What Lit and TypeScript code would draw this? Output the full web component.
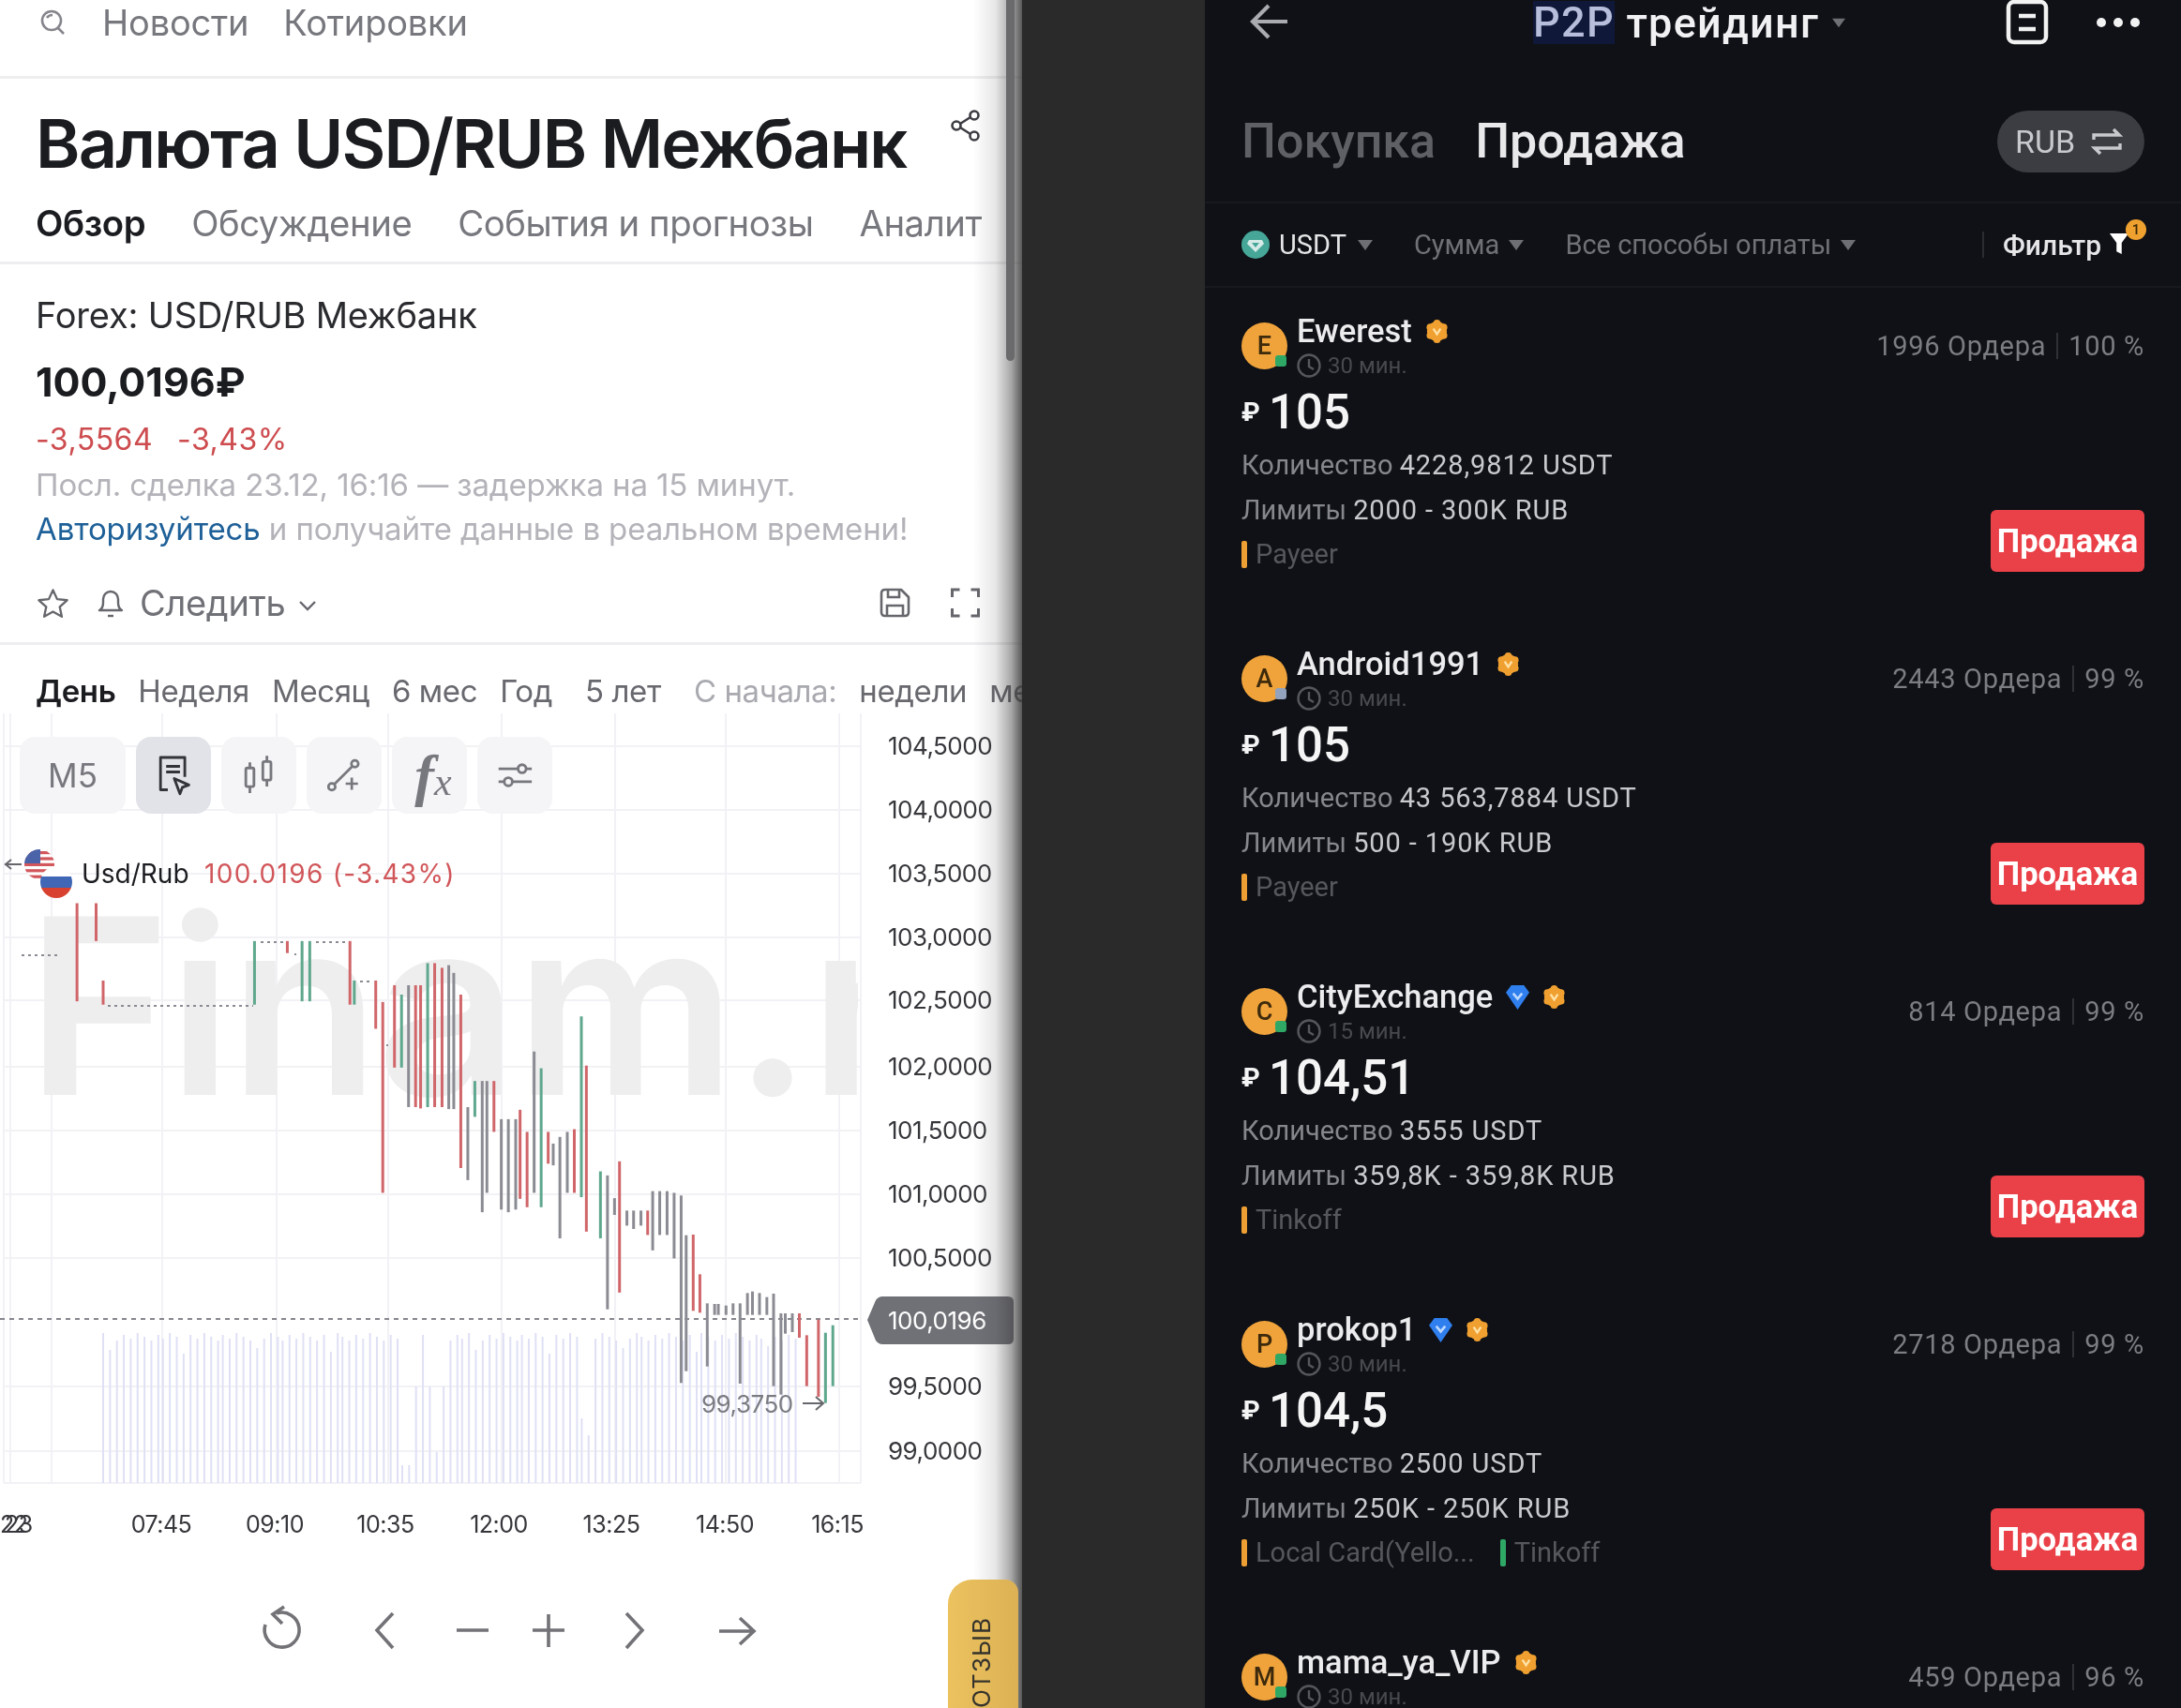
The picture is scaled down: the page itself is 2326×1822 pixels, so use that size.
import { LitElement, css, html, svg } from "lit";
import { customElement } from "lit/decorators.js";

const GRID_Y = [795, 863, 931, 999, 1066, 1137, 1205, 1273, 1341, 1478, 1547];
const GRID_X = [4, 11, 55, 173, 295, 414, 535, 656, 774, 895, 918];
const AXIS = [
  ["104,5000", 795], ["104,0000", 863], ["103,5000", 931], ["103,0000", 999],
  ["102,5000", 1066], ["102,0000", 1137], ["101,5000", 1205], ["101,0000", 1273],
  ["100,5000", 1341], ["99,5000", 1478], ["99,0000", 1547],
] as const;
const TIMES = [["07:45", 172], ["09:10", 293], ["10:35", 411], ["12:00", 532], ["13:25", 652], ["14:50", 773], ["16:15", 893]] as const;

const RED = "#d0666a";
const GREEN = "#5fa78d";
const GRAY = "#8b8c93";

// [x, top, bottom, colour], read off the zoomed reference
const z2 = (x: number, a: number, b: number, c: string) => [x / 2.8, 760 + a / 2.8, 760 + b / 2.8, c] as const;
const z3 = (x: number, a: number, b: number, c: string) => [540 + x / 2.8, 760 + a / 2.8, 760 + b / 2.8, c] as const;
const z5 = (x: number, a: number, b: number, c: string) => [540 + x / 2.8, 1300 + a / 3, 1300 + b / 3, c] as const;
const BARS = [
  z2(230, 567, 860, RED), z2(287, 567, 680, RED), z2(308, 798, 870, RED), z2(760, 680, 870, GREEN),
  z2(858, 680, 716, RED), z2(902, 680, 860, GREEN), z2(925, 680, 860, GREEN), z2(1045, 680, 870, RED),
  z2(1058, 798, 870, GREEN), z2(1122, 798, 942, RED), z2(1143, 862, 1432, RED), z2(1178, 812, 1058, RED),
  z2(1199, 840, 1058, GREEN), z2(1220, 812, 1176, GRAY), z2(1241, 812, 1176, RED), z2(1256, 812, 1180, RED),
  z2(1277, 746, 1176, GREEN), z2(1298, 746, 1176, RED), z2(1320, 760, 1176, RED), z2(1340, 752, 1182, GRAY),
  z2(1355, 775, 1182, GRAY), z2(1376, 840, 1358, RED), z2(1397, 1176, 1394, GRAY), z2(1418, 1098, 1205, GREEN),
  z2(1440, 1098, 1490, GRAY), z2(1454, 1098, 1432, GRAY), z2(1475, 1098, 1250, RED), z2(1497, 1212, 1482, GRAY),
  z2(1518, 1212, 1490, GRAY), z2(1540, 1212, 1482, GRAY), z2(1553, 1184, 1450, RED),
  z3(62, 1250, 1475, RED), z3(83, 1010, 1432, GRAY), z3(104, 1060, 1475, GREEN), z3(125, 1250, 1345, RED),
  z3(140, 1285, 1350, GRAY), z3(160, 1265, 1568, GRAY), z3(182, 1250, 1432, GRAY), z3(203, 1242, 1432, RED),
  z3(224, 905, 1445, GREEN), z3(239, 1052, 1548, RED), z3(281, 1368, 1568, GREEN), z3(302, 1380, 1780, GRAY),
  z3(323, 1448, 1498, GRAY), z3(338, 1338, 1730, RED), z3(360, 1485, 1530, GRAY), z3(380, 1485, 1540, GRAY),
  z3(402, 1485, 1530, GRAY), z3(422, 1485, 1558, RED), z3(437, 1427, 1604, GRAY), z3(458, 1427, 1558, GRAY),
  z3(480, 1427, 1558, GRAY), z3(501, 1432, 1628, GRAY), z3(522, 1440, 2000, GRAY),
  z5(537, 50, 485, GRAY), z5(558, 48, 292, RED), z5(578, 175, 298, RED), z5(600, 268, 470, GRAY),
  z5(622, 270, 305, GRAY), z5(633, 270, 305, GRAY), z5(656, 275, 305, GRAY), z5(677, 268, 305, GRAY),
  z5(698, 268, 525, GRAY), z5(720, 235, 305, GRAY), z5(735, 230, 305, GRAY), z5(756, 235, 305, GRAY),
  z5(778, 248, 305, GRAY), z5(798, 237, 533, GRAY), z5(820, 300, 560, GRAY), z5(833, 300, 365, GRAY),
  z5(854, 300, 360, GRAY), z5(875, 300, 378, RED), z5(897, 370, 533, RED), z5(932, 320, 567, RED),
  z5(953, 362, 587, GREEN), z5(975, 338, 533, GREEN),
];

// dashes of flat 5-minute bars: [x1, x2, y]
const FLATS = [
  [23, 62, 1018], [115, 270, 1072], [278, 305, 1004], [337, 368, 1004], [384, 395, 1046],
  [314, 316, 1017], [412, 414, 1114],
];

// volume bar tops, with the low ones around 10:35-11:30 and 13:00 listed apart
const VOL_LOW: Record<number, number> = { 428: 1562, 436: 1562, 443: 1478, 456: 1478, 464: 1548, 471: 1478, 484: 1447, 620: 1512, 626: 1530 };
const VOLS = (() => {
  const out: [number, number][] = [];
  let x = 110;
  let i = 0;
  while (x < 853) {
    const rx = Math.round(x);
    const key = Object.keys(VOL_LOW).map(Number).find((k) => Math.abs(k - rx) < 4);
    const top = key ? VOL_LOW[key] : 1421 + ((i * 7) % 5) * 2 + (i % 11 === 1 ? 14 : 0);
    out.push([x, top]);
    x += i % 9 === 8 ? 5 : 7.35;
    i++;
  }
  return out;
})();

type Offer = {
  name: string; letter: string; dot: string; diamond?: boolean; time: string; price: string;
  orders: string; pct: string; qty: string; limits: string; pays: [string, string][];
};
const ORANGE = "#ee9f33";
const ONLINE = "#2fa866";
const OFFERS: Offer[] = [
  { name: "Ewerest", letter: "E", dot: ONLINE, time: "30 мин.", price: "105", orders: "1996 Ордера", pct: "100 %", qty: "4228,9812 USDT", limits: "2000 - 300K RUB", pays: [["Payeer", ORANGE]] },
  { name: "Android1991", letter: "A", dot: "#93a3bd", time: "30 мин.", price: "105", orders: "2443 Ордера", pct: "99 %", qty: "43 563,7884 USDT", limits: "500 - 190K RUB", pays: [["Payeer", ORANGE]] },
  { name: "CityExchange", letter: "C", dot: ONLINE, diamond: true, time: "15 мин.", price: "104,51", orders: "814 Ордера", pct: "99 %", qty: "3555 USDT", limits: "359,8K - 359,8K RUB", pays: [["Tinkoff", ORANGE]] },
  { name: "prokop1", letter: "P", dot: ONLINE, diamond: true, time: "30 мин.", price: "104,5", orders: "2718 Ордера", pct: "99 %", qty: "2500 USDT", limits: "250K - 250K RUB", pays: [["Local Card(Yello...", ORANGE], ["Tinkoff", "#2fa866"]] },
  { name: "mama_ya_VIP", letter: "M", dot: ONLINE, time: "30 мин.", price: "", orders: "459 Ордера", pct: "96 %", qty: "", limits: "", pays: [] },
];

const caret = html`<svg class="caret" viewBox="0 0 16 13"><path d="M0 1h16L8 12z" /></svg>`;

const medal = html`<svg class="medal" viewBox="0 0 26 30">
  <g fill="#f0a030">
    <circle cx="13" cy="15" r="11" />
    <circle cx="13" cy="6" r="4" /><circle cx="13" cy="24" r="4" />
    <circle cx="5.500" cy="10.500" r="4" /><circle cx="20.500" cy="10.500" r="4" />
    <circle cx="5.500" cy="19.500" r="4" /><circle cx="20.500" cy="19.500" r="4" />
  </g>
  <path d="M9 12l4 6 4-6" fill="none" stroke="#ffe2a8" stroke-width="2.400" />
</svg>`;

const diamond = html`<svg class="diamond" viewBox="0 0 26 30">
  <path d="M6 2h14l6 8-13 19L0 10z" fill="#2f7fee" />
  <path d="M8 11l5 6 5-6" fill="none" stroke="#bcd8ff" stroke-width="2.600" />
</svg>`;

const clock = html`<svg class="clock" viewBox="0 0 26 28">
  <circle cx="13" cy="14" r="11.500" fill="none" stroke="#55575c" stroke-width="2.400" />
  <path d="M13 7v8l5 3" fill="none" stroke="#55575c" stroke-width="2.400" />
</svg>`;

@customElement("app-root")
export class AppRoot extends LitElement {
  renderChart() {
    return html`<svg class="plot" viewBox="0 760 1090 930" width="1090" height="930">
      <g stroke="#f2f2f6" stroke-width="2" fill="none">
        ${GRID_Y.map((y) => svg`<line x1="4" x2="918" y1=${y} y2=${y} />`)}
        ${GRID_X.map((x) => svg`<line x1=${x} x2=${x} y1="760" y2="1581" />`)}
        <line x1="4" x2="918" y1="1581" y2="1581" />
      </g>
      <defs>
        <clipPath id="pane"><rect x="0" y="760" width="915" height="821" /></clipPath>
        <clipPath id="us"><circle cx="42" cy="921" r="16" /></clipPath>
        <clipPath id="ru"><circle cx="60" cy="940" r="17" /></clipPath>
      </defs>
      <g clip-path="url(#pane)"><text x="28" y="1167" class="mark">Finam.ru</text></g>
      <g stroke="#dfe0f5" stroke-width="2">
        ${VOLS.map(([x, t]) => svg`<line x1=${x} x2=${x} y1=${t} y2="1581" />`)}
      </g>
      <line x1="0" x2="918" y1="1406" y2="1406" stroke="#85868c" stroke-width="2" stroke-dasharray="5 5" />
      ${FLATS.map(([a, b, y]) => svg`<line x1=${a} x2=${b} y1=${y} y2=${y} stroke="#8b8c93" stroke-width="2" stroke-dasharray="3 4" />`)}
      ${BARS.map(([x, a, b, c]) => svg`<line x1=${x} x2=${x} y1=${a} y2=${b} stroke=${c} stroke-width="3" />`)}
      <path d="M925 1407l9-21q3-4 7-4h134q6 0 6 6v39q0 6-6 6h-134q-4 0-7-4z" fill="#707177" />
      <text x="947" y="1417" class="tag">100,0196</text>
      ${AXIS.map(([t, y]) => svg`<text x="947" y=${y + 9} class="axis">${t}</text>`)}
      <text x="748" y="1506" class="low">99,3750</text>
      <path d="M856 1496h22m-8-7l8 7-8 7" fill="none" stroke="#66676c" stroke-width="2" />
      ${TIMES.map(([t, x]) => svg`<text x=${x} y="1634" class="time" text-anchor="middle">${t}</text>`)}
      <text x="0" y="1634" class="time">22</text><text x="5" y="1634" class="time">23</text>
      <path d="M5 921h18m-11-5l-6 5 6 5" fill="none" stroke="#66676c" stroke-width="2" />
      <g clip-path="url(#us)">
        <rect x="26" y="905" width="32" height="32" fill="#fff" />
        ${[0, 1, 2, 3, 4].map((i) => svg`<rect x="26" y=${907 + i * 6.4} width="32" height="3.200" fill="#d2575c" />`)}
        <rect x="26" y="905" width="17" height="15" fill="#4b63a8" />
      </g>
      <g clip-path="url(#ru)">
        <rect x="43" y="923" width="34" height="11" fill="#fff" />
        <rect x="43" y="934" width="34" height="12" fill="#3f67b5" />
        <rect x="43" y="946" width="34" height="12" fill="#d8412f" />
      </g>
      <text x="87" y="941" class="pair">Usd/Rub</text>
      <text x="218" y="941" class="quote">100.0196 (-3.43%)</text>
    </svg>`;
  }

  renderToolbar() {
    return html`<div class="tools">
      <div class="tool m5">M5</div>
      <div class="tool on">
        <svg viewBox="0 0 44 50" width="38" height="46" fill="none" stroke="#33343a" stroke-width="3.300">
          <path d="M15 43H6V3h30v24" stroke-linejoin="round" />
          <path d="M13 14h17M13 21h17" />
          <path d="M23 29l18 8-8 3-3 8z" stroke-linejoin="round" />
        </svg>
      </div>
      <div class="tool">
        <svg viewBox="0 0 44 50" width="38" height="44" fill="none" stroke="#77787e" stroke-width="3.300">
          <rect x="6" y="16" width="10" height="23" rx="2" /><path d="M11 9v7M11 39v8" />
          <rect x="27" y="8" width="10" height="23" rx="2" /><path d="M32 1v7M32 31v8" />
        </svg>
      </div>
      <div class="tool">
        <svg viewBox="0 0 44 44" width="36" height="38" fill="none" stroke="#77787e" stroke-width="3.300">
          <circle cx="6" cy="37" r="4.500" /><circle cx="36" cy="7" r="4.500" /><path d="M9 34L33 10" />
          <path d="M24 33h16M32 25v16" />
        </svg>
      </div>
      <div class="tool fx"><span class="f">f</span><span class="x">x</span></div>
      <div class="tool">
        <svg viewBox="0 0 44 30" width="38" height="28" fill="none" stroke="#77787e" stroke-width="3.300">
          <path d="M2 7h24M36 7h7M2 23h7M19 23h24" /><circle cx="31" cy="7" r="5" /><circle cx="14" cy="23" r="5" />
        </svg>
      </div>
    </div>`;
  }

  renderLeft() {
    return html`<section class="left">
      <div class="topbar">
        <svg class="search" viewBox="0 0 28 28" fill="none" stroke="#85868c" stroke-width="2.600">
          <circle cx="13" cy="12" r="10" /><path d="M20 20l6 6M8 9q2-3 6-3" />
        </svg>
        <span>Новости</span><span>Котировки</span>
      </div>
      <div class="titlerow">
        <h1>Валюта USD/RUB Межбанк</h1>
        <svg class="share" viewBox="0 0 32 34" fill="none" stroke="#3c3d42" stroke-width="2.600">
          <circle cx="25" cy="6" r="4.500" /><circle cx="6" cy="17" r="4.500" /><circle cx="25" cy="28" r="4.500" />
          <path d="M10 15l11-7M10 19l11 7" />
        </svg>
      </div>
      <nav class="tabs">
        <b>Обзор</b><span>Обсуждение</span><span>События и прогнозы</span><span>Аналит</span>
      </nav>
      <div class="summary">
        <div class="forex">Forex: USD/RUB Межбанк</div>
        <div class="price">100,0196₽</div>
        <div class="delta"><span>-3,5564</span><span>-3,43%</span></div>
        <div class="note">Посл. сделка 23.12, 16:16 — задержка на 15 минут.</div>
        <div class="note"><a>Авторизуйтесь</a> и получайте данные в реальном времени!</div>
      </div>
      <div class="actions">
        <svg class="act star" viewBox="0 0 34 32" fill="none" stroke="#66676c" stroke-width="2.400">
          <path d="M17 2l4.600 10 10.900 1.200-8.100 7.300 2.300 10.700L17 25.800 7.300 31.200l2.300-10.700L1.500 13.200 12.400 12z" stroke-linejoin="round" />
        </svg>
        <svg class="act bell" viewBox="0 0 30 32" fill="none" stroke="#66676c" stroke-width="2.400">
          <path d="M3 24q4-2 4-8v-4a8 8 0 0116 0v4q0 6 4 8z" stroke-linejoin="round" /><path d="M12 30h6" />
        </svg>
        <span class="follow">Следить</span>
        <svg class="chev" viewBox="0 0 18 12" fill="none" stroke="#66676c" stroke-width="2.400"><path d="M1 2l8 8 8-8" /></svg>
        <span class="grow"></span>
        <svg class="act" viewBox="0 0 33 32" fill="none" stroke="#66676c" stroke-width="2.600">
          <path d="M2 6q0-4 4-4h17l8 8v16q0 4-4 4H6q-4 0-4-4z" stroke-linejoin="round" />
          <path d="M8 30V19h17v11M9 2v8h12V2" />
        </svg>
        <svg class="act full" viewBox="0 0 32 32" fill="none" stroke="#66676c" stroke-width="3">
          <path d="M2 10V2h8M22 2h8v8M30 22v8h-8M10 30H2v-8" />
        </svg>
      </div>
      <div class="ranges">
        <b>День</b><span>Неделя</span><span>Месяц</span><span>6 мес</span><span>Год</span>
        <span class="wide">5 лет</span><span class="dim">С начала:</span><span>недели</span><span>ме</span>
      </div>
      <div class="chart">${this.renderChart()}${this.renderToolbar()}</div>
      <svg class="navbar" viewBox="0 1690 1090 132" width="1090" height="132" fill="none" stroke="#727277" stroke-width="3.600">
        <path d="M283 1732a18.500 18.500 0 1 0 12-12" />
        <path d="M303 1713l-12 8 10 10" />
        <path d="M419 1720l-17 18 17 19M487 1738h34M568 1738h34M585 1721v35M668 1720l17 18-17 19M767 1739h37m-15-14l15 14-15 14" />
      </svg>
      <div class="shade"></div>
      <div class="thumb"></div>
      <div class="feedback"><span>ОТЗЫВ</span></div>
    </section>`;
  }

  renderOffer(o: Offer) {
    return html`<article class="offer">
      <div class="info">
        <div class="who">
          <div class="avatar">${o.letter}<i style="background:${o.dot}"></i></div>
          <div>
            <div class="name">${o.name}${o.diamond ? diamond : ""}${medal}</div>
            <div class="wait">${clock}${o.time}</div>
          </div>
        </div>
        ${o.price
          ? html`<div class="rate"><small>₽</small>${o.price}</div>
              <div class="line">Количество <em>${o.qty}</em></div>
              <div class="line">Лимиты <em>${o.limits}</em></div>
              <div class="pays">
                ${o.pays.map(([p, c]) => html`<span class="pay"><i style="background:${c}"></i>${p}</span>`)}
              </div>`
          : ""}
      </div>
      <div class="side">
        <div class="stats">${o.orders}<i></i>${o.pct}</div>
        ${o.price ? html`<button>Продажа</button>` : ""}
      </div>
    </article>`;
  }

  renderRight() {
    return html`<section class="right">
      <header>
        <svg class="back" viewBox="0 0 42 38" fill="none" stroke="#a9abb0" stroke-width="4.200">
          <path d="M41 19H4M21 2L4 19l17 17" />
        </svg>
        <div class="title"><mark>P2P</mark> трейдинг${caret}</div>
        <svg class="doc" viewBox="0 0 46 48" fill="none" stroke="#f2f2f2" stroke-width="4.500">
          <rect x="3" y="2" width="40" height="43" rx="6" />
          <path d="M14 17h18M14 31h18" />
        </svg>
        <div class="dots"><i></i><i></i><i></i></div>
      </header>
      <div class="sides">
        <span class="off">Покупка</span><span>Продажа</span>
        <div class="fiat">
          RUB
          <svg viewBox="0 0 34 30" fill="none" stroke="#c8c9cd" stroke-width="3.400">
            <path d="M3 13V8h27l-6-6M31 17v5H4l6 6" />
          </svg>
        </div>
      </div>
      <div class="filters">
        <svg class="coin" viewBox="0 0 30 30">
          <circle cx="15" cy="15" r="15" fill="#46a698" />
          <path d="M8 10h14l2 4-9 9-9-9z" fill="#d6ebe8" />
          <path d="M11 13h8l-4 5z" fill="#46a698" />
        </svg>
        <span class="lit">USDT</span>${caret}
        <span class="opt">Сумма</span>${caret}
        <span class="opt">Все способы оплаты</span>${caret}
        <span class="grow"></span>
        <i class="sep"></i>
        <span class="lit strong">Фильтр</span>
        <span class="funnel">
          <svg viewBox="0 0 24 26"><path d="M1 1h22l-8 11v13l-6-3V12z" fill="#fff" /></svg>
          <b>1</b>
        </span>
      </div>
      ${OFFERS.map((o) => this.renderOffer(o))}
    </section>`;
  }

  render() {
    return html`${this.renderLeft()}<div class="gutter"></div>${this.renderRight()}`;
  }

  static styles = css`
    :host {
      display: flex;
      width: 2326px;
      height: 1822px;
      overflow: hidden;
      background: #2a2a2a;
    }
    svg {
      display: block;
      flex: none;
    }

    /* left: quote page */
    .left {
      position: relative;
      width: 1090px;
      height: 1822px;
      flex: none;
      overflow: hidden;
      background: #fff;
      color: #1b1c20;
      font-family: Inter, "Noto Sans", sans-serif;
      filter: blur(0.5px);
    }
    .topbar {
      box-sizing: border-box;
      height: 84px;
      padding: 0 0 33px 42px;
      border-bottom: 3px solid #eeeef0;
      display: flex;
      align-items: center;
      gap: 37px;
      font-size: 38px;
      color: #77787e;
      letter-spacing: -0.2px;
    }
    .search {
      width: 28px;
      height: 28px;
      margin-right: 2px;
    }
    .titlerow {
      height: 135px;
      padding: 19px 44px 0 38px;
      box-sizing: border-box;
      display: flex;
      justify-content: space-between;
      align-items: flex-start;
    }
    h1 {
      margin: 0;
      height: 100px;
      line-height: 100px;
      font-size: 72px;
      font-weight: 600;
      letter-spacing: -1.8px;
      white-space: nowrap;
    }
    .share {
      width: 32px;
      height: 34px;
      margin-top: 14px;
    }
    .tabs {
      height: 63px;
      box-sizing: border-box;
      border-bottom: 3px solid #eeeef0;
      padding: 0 0 22px 38px;
      display: flex;
      align-items: center;
      gap: 49px;
      font-size: 38.300px;
      letter-spacing: -0.45px;
      color: #77787e;
      white-space: nowrap;
    }
    .tabs b {
      color: #1b1c20;
      font-weight: 600;
    }
    .summary {
      padding: 33px 0 0 38px;
      height: 338px;
      box-sizing: border-box;
    }
    .forex {
      height: 42px;
      line-height: 42px;
      font-size: 38px;
      letter-spacing: -0.2px;
      color: #2a2b2f;
    }
    .price {
      margin-top: 27px;
      height: 46px;
      line-height: 46px;
      font-size: 43px;
      font-weight: 700;
    }
    .delta {
      margin-top: 19px;
      height: 40px;
      line-height: 40px;
      display: flex;
      gap: 26px;
      font-size: 32px;
      letter-spacing: 0.5px;
      color: #cd4c4f;
    }
    .note {
      margin-top: 8px;
      height: 40px;
      line-height: 40px;
      font-size: 33px;
      letter-spacing: -0.1px;
      color: #b3b3b9;
      white-space: nowrap;
    }
    .note + .note {
      margin-top: 7px;
    }
    .note a {
      color: #1e6098;
    }
    .actions {
      height: 68px;
      box-sizing: border-box;
      border-bottom: 3px solid #eeeef0;
      padding: 0 44px 20px 40px;
      display: flex;
      align-items: center;
      font-size: 38px;
      letter-spacing: -0.3px;
      color: #707177;
    }
    .act {
      width: 33px;
      height: 32px;
    }
    .bell {
      width: 30px;
      margin-left: 30px;
    }
    .full {
      margin-left: 42px;
    }
    .follow {
      margin-left: 16px;
    }
    .chev {
      width: 18px;
      height: 12px;
      margin: 6px 0 0 14px;
    }
    .grow {
      flex: 1;
    }
    .ranges {
      height: 73px;
      box-sizing: border-box;
      padding: 24px 0 0 38px;
      display: flex;
      align-items: center;
      gap: 24px;
      font-size: 33px;
      letter-spacing: -0.4px;
      color: #68696f;
      white-space: nowrap;
    }
    .ranges b {
      color: #1b1c20;
      font-weight: 600;
    }
    .ranges .wide {
      margin-left: 11px;
      margin-right: 11px;
    }
    .ranges .dim {
      color: #a9aab0;
    }
    .chart {
      position: relative;
      height: 930px;
    }
    .plot {
      position: absolute;
      inset: 0;
    }
    .mark {
      font: 600 262px Inter, sans-serif;
      fill: #eeeeef;
      letter-spacing: -3px;
    }
    .axis,
    .tag,
    .time,
    .low {
      font: 400 26px Inter, sans-serif;
      letter-spacing: -0.5px;
    }
    .axis {
      fill: #36373b;
    }
    .tag {
      fill: #fff;
    }
    .time {
      font-size: 25px;
      fill: #36373b;
    }
    .low {
      fill: #7b7c82;
    }
    .pair {
      font: 400 28px Inter, sans-serif;
      fill: #1b1c20;
    }
    .quote {
      font: 400 28px Inter, sans-serif;
      letter-spacing: 1.300px;
      fill: #d1565a;
    }
    .tools {
      position: absolute;
      left: 21px;
      top: 25px;
      display: flex;
      gap: 11px;
    }
    .tool {
      width: 80px;
      height: 82px;
      border-radius: 16px;
      background: #f5f5f7;
      display: flex;
      align-items: center;
      justify-content: center;
    }
    .tool.on {
      background: #e2e3e8;
    }
    .m5 {
      width: 113px;
      font-size: 35px;
      color: #77787e;
    }
    .fx {
      font-family: "Liberation Serif", serif;
      font-style: italic;
      color: #77787e;
      align-items: baseline;
      padding: 6px 0 0 8px;
      box-sizing: border-box;
    }
    .fx .f {
      font-size: 62px;
      font-weight: 700;
    }
    .fx .x {
      font-size: 42px;
    }
    .navbar {
      display: block;
    }
    .shade {
      position: absolute;
      top: 0;
      right: 0;
      width: 52px;
      height: 100%;
      background: linear-gradient(
        to right,
        rgba(60, 60, 60, 0),
        rgba(60, 60, 60, 0.12) 45%,
        rgba(60, 60, 60, 0.45) 78%,
        rgba(60, 60, 60, 0.85)
      );
    }
    .thumb {
      position: absolute;
      top: 0;
      left: 1073px;
      width: 9px;
      height: 385px;
      border-radius: 0 0 5px 5px;
      background: #6a6a6c;
    }
    .feedback {
      position: absolute;
      left: 1011px;
      top: 1685px;
      width: 75px;
      height: 137px;
      box-sizing: border-box;
      border-radius: 26px 14px 0 0;
      background: linear-gradient(to right, #ecc25f, #dcb155);
      overflow: hidden;
    }
    .feedback span {
      position: absolute;
      left: 36px;
      top: 137px;
      transform: rotate(-90deg);
      transform-origin: 0 0;
      margin-left: -17px;
      line-height: 34px;
      font-size: 26px;
      letter-spacing: 1px;
      color: #35332c;
      white-space: nowrap;
    }

    .gutter {
      width: 195px;
      flex: none;
      background: #2a2a2a;
    }

    /* right: P2P list */
    .right {
      flex: 1;
      height: 1822px;
      overflow: hidden;
      background: #0f1116;
      color: #e9e9eb;
      font-family: Roboto, "Noto Sans", sans-serif;
      filter: blur(0.7px);
    }
    header {
      height: 60px;
      display: flex;
      align-items: center;
      position: relative;
    }
    .back {
      width: 42px;
      height: 38px;
      margin: 0 0 14px 47px;
    }
    .title {
      position: absolute;
      left: 350px;
      top: 0;
      height: 48px;
      display: flex;
      align-items: center;
      font-size: 45px;
      font-weight: 500;
      letter-spacing: 1.300px;
      white-space: pre;
      color: #f1f1f3;
    }
    mark {
      background: #10183a;
      color: #b7bedb;
      line-height: 46px;
    }
    .title .caret {
      margin-left: 14px;
      width: 14px;
    }
    .caret {
      width: 16px;
      height: 13px;
      fill: #6d6f74;
    }
    .doc {
      position: absolute;
      left: 854px;
      top: 0;
      width: 46px;
      height: 48px;
    }
    .dots {
      position: absolute;
      left: 951px;
      top: 19px;
      display: flex;
      gap: 8px;
    }
    .dots i {
      width: 10px;
      height: 10px;
      border-radius: 50%;
      background: #f2f2f2;
    }
    .sides {
      box-sizing: border-box;
      height: 157px;
      border-bottom: 2px solid #17191e;
      padding: 25px 39px 0;
      display: flex;
      align-items: center;
      gap: 42px;
      font-size: 52px;
      font-weight: 500;
    }
    .off {
      color: #5e6065;
    }
    .fiat {
      margin-left: auto;
      width: 157px;
      height: 66px;
      margin-top: 2px;
      box-sizing: border-box;
      padding-left: 19px;
      border-radius: 33px;
      background: #3b3d42;
      display: flex;
      align-items: center;
      gap: 17px;
      font-size: 34px;
      font-weight: 400;
      color: #c8c9cd;
    }
    .fiat svg {
      width: 34px;
      height: 30px;
    }
    .filters {
      box-sizing: border-box;
      height: 90px;
      margin-bottom: 22px;
      border-bottom: 2px solid #17191e;
      padding: 0 39px;
      display: flex;
      align-items: center;
      font-size: 29px;
      color: #6f7176;
    }
    .coin {
      width: 30px;
      height: 30px;
      margin-right: 10px;
    }
    .lit {
      color: #e6e6e8;
      margin-right: 12px;
    }
    .opt {
      margin: 0 10px 0 44px;
    }
    .sep {
      width: 2px;
      height: 28px;
      background: #2a2c31;
      margin-right: 20px;
    }
    .strong {
      font-size: 30px;
      font-weight: 500;
      margin-right: 8px;
    }
    .funnel {
      position: relative;
      width: 22px;
      height: 26px;
      margin-right: 16px;
    }
    .funnel b {
      position: absolute;
      left: 18px;
      top: -14px;
      width: 22px;
      height: 22px;
      border-radius: 50%;
      background: #eea12f;
      color: #3a2a08;
      font-size: 15px;
      font-weight: 500;
      line-height: 22px;
      text-align: center;
    }
    .offer {
      box-sizing: border-box;
      height: 355px;
      padding: 0 39px;
      display: flex;
      justify-content: space-between;
    }
    .info {
      height: 281px;
    }
    .who {
      display: flex;
      gap: 10px;
    }
    .avatar {
      position: relative;
      width: 49px;
      height: 50px;
      margin-top: 15px;
      border-radius: 50%;
      background: #f0a33b;
      color: #3d2a0c;
      font-size: 27px;
      font-weight: 500;
      line-height: 50px;
      text-align: center;
    }
    .avatar i {
      position: absolute;
      right: 1px;
      bottom: 3px;
      width: 12px;
      height: 12px;
      border-radius: 3px;
    }
    .name {
      height: 48px;
      display: flex;
      align-items: center;
      gap: 14px;
      font-size: 34.500px;
      font-weight: 500;
      color: #ececee;
    }
    .medal,
    .diamond {
      width: 25px;
      height: 29px;
    }
    .wait {
      height: 26px;
      display: flex;
      align-items: center;
      gap: 7px;
      font-size: 24px;
      color: #47494e;
    }
    .clock {
      width: 26px;
      height: 28px;
    }
    .rate {
      margin-top: 13px;
      height: 48px;
      line-height: 48px;
      font-size: 51px;
      font-weight: 500;
      color: #f5f5f6;
      display: flex;
      align-items: center;
      gap: 11px;
    }
    .rate small {
      font-size: 28px;
      font-weight: 700;
      width: 18px;
    }
    .line {
      margin-top: 16px;
      height: 32px;
      line-height: 32px;
      font-size: 29px;
      color: #85878c;
      white-space: pre;
    }
    .line em {
      font-style: normal;
      letter-spacing: 0.9px;
      color: #c9cacd;
    }
    .pays {
      margin-top: 15px;
      height: 32px;
      display: flex;
      gap: 27px;
    }
    .pay {
      display: flex;
      align-items: center;
      gap: 9px;
      font-size: 29px;
      color: #55575c;
    }
    .pay i {
      width: 6px;
      height: 29px;
      border-radius: 2px;
    }
    .side {
      height: 281px;
      display: flex;
      flex-direction: column;
      justify-content: space-between;
      align-items: flex-end;
    }
    .stats {
      margin-top: 20px;
      height: 40px;
      display: flex;
      align-items: center;
      font-size: 29px;
      letter-spacing: 0.7px;
      color: #7b7d82;
      white-space: pre;
    }
    .stats i {
      width: 2px;
      height: 28px;
      margin: 0 11px;
      background: #2f3136;
    }
    button {
      width: 164px;
      height: 66px;
      padding: 0;
      border: 0;
      border-radius: 6px;
      background: #ea4149;
      color: #fff;
      font: 700 34.500px Roboto, sans-serif;
    }
  `;
}
